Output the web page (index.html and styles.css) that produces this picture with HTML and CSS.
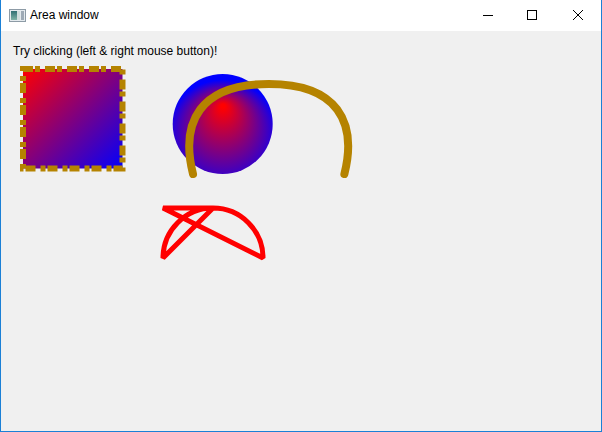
FILE: index.html
```html
<!DOCTYPE html>
<html>
<head>
<meta charset="utf-8">
<title>Area window</title>
<link rel="stylesheet" href="styles.css">
</head>
<body>
<div class="window">
  <div class="titlebar">
    <svg class="app-icon" width="17" height="13" viewBox="0 0 17 13">
      <defs>
        <linearGradient id="ig" x1="0" y1="0" x2="0" y2="1">
          <stop offset="0" stop-color="#2f6f73"/>
          <stop offset="1" stop-color="#7fb3a6"/>
        </linearGradient>
      </defs>
      <rect x="0.5" y="0.5" width="16" height="12" fill="#e4eaee" stroke="#8d9ba6"/>
      <rect x="2" y="2" width="6" height="9" fill="url(#ig)"/>
      <rect x="8" y="2" width="3" height="9" fill="#cfdcdc"/>
      <rect x="12" y="2" width="3" height="9" fill="#9eaab5"/>
    </svg>
    <span class="title">Area window</span>
    <div class="caption-buttons">
      <div class="cap-btn cap-min">
        <svg width="10" height="10" viewBox="0 0 10 10"><line x1="0" y1="5.5" x2="10" y2="5.5" stroke="#000" stroke-width="1"/></svg>
      </div>
      <div class="cap-btn">
        <svg width="10" height="10" viewBox="0 0 10 10"><rect x="0.5" y="0.5" width="9" height="9" fill="none" stroke="#000" stroke-width="1"/></svg>
      </div>
      <div class="cap-btn">
        <svg width="10" height="10" viewBox="0 0 10 10"><path d="M0,0 L10,10 M10,0 L0,10" stroke="#000" stroke-width="1"/></svg>
      </div>
    </div>
  </div>
  <div class="client">
    <div class="label">Try clicking (left &amp; right mouse button)!</div>
    <svg class="area" width="600" height="373" viewBox="1 58 600 373">
      <defs>
        <linearGradient id="lg" gradientUnits="userSpaceOnUse" x1="23" y1="69" x2="123" y2="169">
          <stop offset="0" stop-color="#ff0000"/>
          <stop offset="1" stop-color="#0000ff"/>
        </linearGradient>
        <radialGradient id="rg" gradientUnits="userSpaceOnUse" cx="222.7" cy="138" r="58" fx="223" fy="106" fr="2">
          <stop offset="0" stop-color="#ff0000"/>
          <stop offset="1" stop-color="#0000ff"/>
        </radialGradient>
      </defs>
      <rect x="23" y="69" width="99.5" height="99.5" fill="url(#lg)"/>
      <rect x="23" y="69" width="99.5" height="99.5" fill="none" stroke="#b58300" stroke-width="6" stroke-dasharray="10 2 5 5"/>
      <circle cx="222.7" cy="124" r="50" fill="url(#rg)"/>
      <path d="M193,174 C180,122 200,84 268.7,84 S357.4,122 344.4,174" fill="none" stroke="#b58300" stroke-width="8" stroke-linecap="round"/>
      <path d="M163,208 L213,208 A50,50 0 0 1 263,258 Z M163,258 A50,50 0 0 1 213,208 Z" fill="none" stroke="#ff0000" stroke-width="5" stroke-linejoin="bevel"/>
    </svg>
  </div>
</div>
</body>
</html>
```

FILE: styles.css
```css
html, body {
  margin: 0;
  padding: 0;
  background: #ffffff;
}

.window {
  width: 602px;
  height: 432px;
  box-sizing: border-box;
  border: 1px solid #1b80d6;
  border-top: none;
  display: flex;
  flex-direction: column;
  font-family: "Liberation Sans", Arial, sans-serif;
  overflow: hidden;
}

.titlebar {
  height: 31px;
  flex: none;
  display: flex;
  align-items: center;
  background: #ffffff;
}

.app-icon {
  display: block;
  margin-left: 8px;
}

.title {
  margin-left: 4px;
  font-size: 12px;
  line-height: 31px;
  color: #000000;
}

.caption-buttons {
  margin-left: auto;
  display: flex;
  height: 31px;
  align-self: flex-start;
}

.cap-btn {
  width: 46px;
  height: 30px;
  display: flex;
  align-items: center;
  justify-content: center;
}

.cap-btn svg {
  display: block;
}

.cap-min svg {
  margin-left: 4px;
}

.client {
  flex: 1;
  background: #f0f0f0;
  display: flex;
  flex-direction: column;
}

.label {
  margin-top: 13px;
  padding-left: 12px;
  height: 14px;
  font-size: 12px;
  line-height: 14px;
  color: #000000;
  white-space: nowrap;
}

.area {
  display: block;
  flex: none;
}
```
